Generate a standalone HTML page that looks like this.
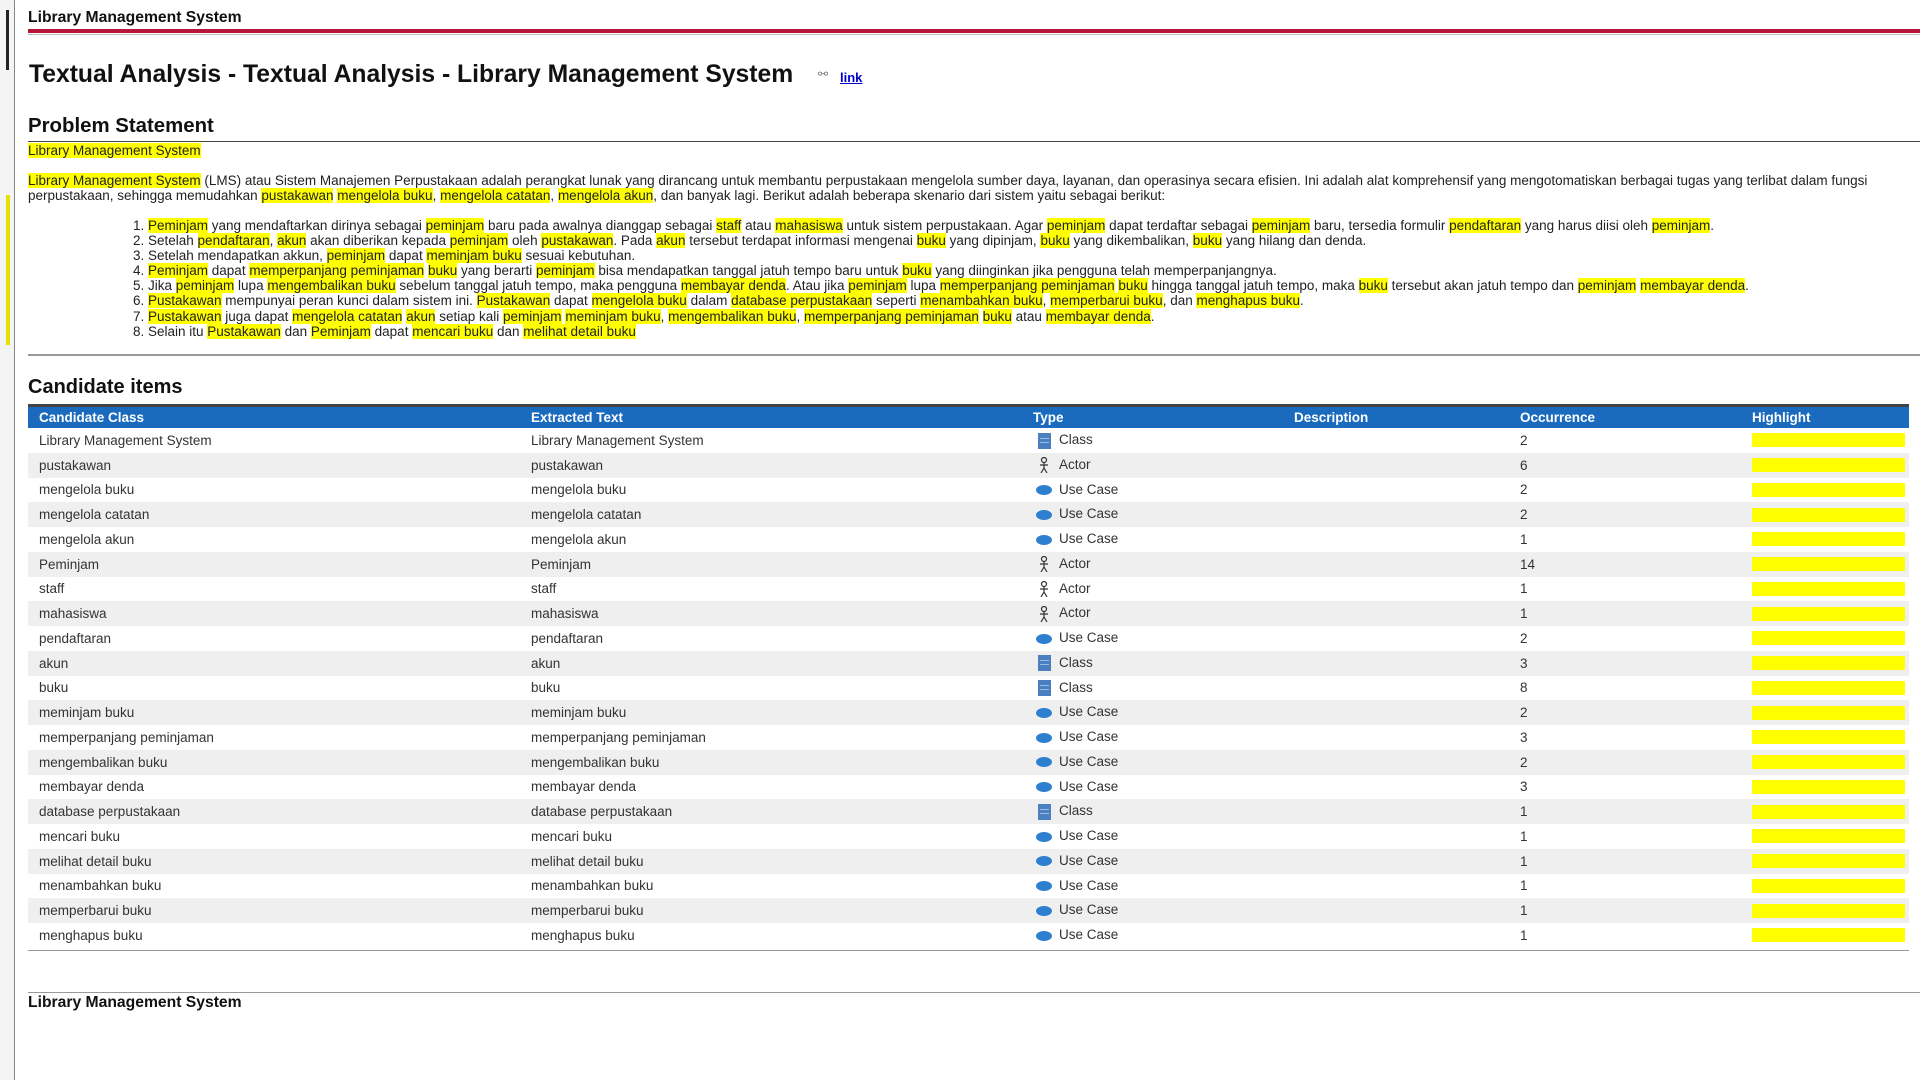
<!DOCTYPE html>
<html><head><meta charset="utf-8"><style>
*{margin:0;padding:0;box-sizing:border-box}
body{width:1920px;height:1080px;overflow:hidden;background:#fff;font-family:"Liberation Sans",Arial,sans-serif;color:#222;position:relative}
.a{position:absolute;white-space:nowrap}
m{background:#ffff00;color:#222}
.t{font-size:13.5px;line-height:15.1px}
table{border-collapse:collapse;width:1881px;font-size:13.5px;table-layout:fixed}
td,th{height:24.75px;padding:0 0 0 11px;text-align:left;white-space:nowrap;color:#333}
th{color:#fff;background:#1a6bbd;font-weight:bold;height:21px}
tr:nth-child(odd) td{background:#efefef}
.hl{display:block;width:153px;height:14px;background:#ffff00}
.ic{display:inline-block;vertical-align:middle;margin-left:3px;margin-right:7px;width:16px}
</style></head><body>
<div class="a" style="left:14px;top:0;width:1px;height:1080px;background:#888"></div>
<div class="a" style="left:0;top:0;width:14px;height:1080px;background:#f4f4f4"></div>
<div class="a" style="left:6px;top:10px;width:3px;height:60px;background:#222"></div>
<div class="a" style="left:6px;top:195px;width:4px;height:150px;background:#e8e000"></div>

<div class="a" style="left:28px;top:9px;font-size:15.7px;font-weight:bold;color:#111">Library Management System</div>
<div class="a" style="left:28px;top:29px;width:1892px;height:4px;background:#b5173a"></div>
<div class="a" style="left:28px;top:34px;width:1892px;height:1px;background:#bbb"></div>

<div class="a" style="left:29px;top:61px;font-size:24.7px;font-weight:bold;color:#111">Textual Analysis - Textual Analysis - Library Management System</div>
<div class="a" style="left:818px;top:67px;font-size:12px;color:#777">⚯</div>
<div class="a" style="left:840px;top:70px;font-size:13px;font-weight:bold;color:#00c;text-decoration:underline">link</div>

<div class="a" style="left:28px;top:115px;font-size:20.4px;font-weight:bold;color:#111">Problem Statement</div>
<div class="a" style="left:28px;top:141px;width:1892px;height:1px;background:#444"></div>
<div class="a t" style="left:28px;top:143px"><m>Library Management System</m></div>
<div class="a t" style="left:28px;top:173px"><m>Library Management System</m> (LMS) atau Sistem Manajemen Perpustakaan adalah perangkat lunak yang dirancang untuk membantu perpustakaan mengelola sumber daya, layanan, dan operasinya secara efisien. Ini adalah alat komprehensif yang mengotomatiskan berbagai tugas yang terlibat dalam fungsi<br>perpustakaan, sehingga memudahkan <m>pustakawan</m> <m>mengelola buku</m>, <m>mengelola catatan</m>, <m>mengelola akun</m>, dan banyak lagi. Berikut adalah beberapa skenario dari sistem yaitu sebagai berikut:</div>

<ol class="a t" style="left:148px;top:218px">
<li><m>Peminjam</m> yang mendaftarkan dirinya sebagai <m>peminjam</m> baru pada awalnya dianggap sebagai <m>staff</m> atau <m>mahasiswa</m> untuk sistem perpustakaan. Agar <m>peminjam</m> dapat terdaftar sebagai <m>peminjam</m> baru, tersedia formulir <m>pendaftaran</m> yang harus diisi oleh <m>peminjam</m>.</li>
<li>Setelah <m>pendaftaran</m>, <m>akun</m> akan diberikan kepada <m>peminjam</m> oleh <m>pustakawan</m>. Pada <m>akun</m> tersebut terdapat informasi mengenai <m>buku</m> yang dipinjam, <m>buku</m> yang dikembalikan, <m>buku</m> yang hilang dan denda.</li>
<li>Setelah mendapatkan akkun, <m>peminjam</m> dapat <m>meminjam buku</m> sesuai kebutuhan.</li>
<li><m>Peminjam</m> dapat <m>memperpanjang peminjaman</m> <m>buku</m> yang berarti <m>peminjam</m> bisa mendapatkan tanggal jatuh tempo baru untuk <m>buku</m> yang diinginkan jika pengguna telah memperpanjangnya.</li>
<li>Jika <m>peminjam</m> lupa <m>mengembalikan buku</m> sebelum tanggal jatuh tempo, maka pengguna <m>membayar denda</m>. Atau jika <m>peminjam</m> lupa <m>memperpanjang peminjaman</m> <m>buku</m> hingga tanggal jatuh tempo, maka <m>buku</m> tersebut akan jatuh tempo dan <m>peminjam</m> <m>membayar denda</m>.</li>
<li><m>Pustakawan</m> mempunyai peran kunci dalam sistem ini. <m>Pustakawan</m> dapat <m>mengelola buku</m> dalam <m>database perpustakaan</m> seperti <m>menambahkan buku</m>, <m>memperbarui buku</m>, dan <m>menghapus buku</m>.</li>
<li><m>Pustakawan</m> juga dapat <m>mengelola catatan</m> <m>akun</m> setiap kali <m>peminjam</m> <m>meminjam buku</m>, <m>mengembalikan buku</m>, <m>memperpanjang peminjaman</m> <m>buku</m> atau <m>membayar denda</m>.</li>
<li>Selain itu <m>Pustakawan</m> dan <m>Peminjam</m> dapat <m>mencari buku</m> dan <m>melihat detail buku</m></li>
</ol>

<div class="a" style="left:28px;top:354px;width:1892px;height:2px;background:#999"></div>

<div class="a" style="left:28px;top:376px;font-size:20px;font-weight:bold;color:#111">Candidate items</div>
<div class="a" style="left:28px;top:404px;width:1881px;height:3px;background:#444"></div>

<div class="a" style="left:28px;top:407px">
<svg width="0" height="0" style="position:absolute"><defs>
<g id="cls"><rect x="2" y="0" width="13" height="16" fill="#4a7fc0"/><rect x="4" y="5" width="9" height="1" fill="#9bbbe0"/><rect x="4" y="9" width="9" height="1" fill="#9bbbe0"/></g>
<g id="uc"><ellipse cx="8" cy="8" rx="8" ry="5" fill="#2f7fd0"/></g>
<g id="act" fill="none" stroke="#333" stroke-width="1.2"><circle cx="8" cy="3" r="2.5"/><path d="M8 5.5V11M4 8h8M8 11l-3 5M8 11l3 5"/></g>
</defs></svg>
<table>
<colgroup><col style="width:492px"><col style="width:502px"><col style="width:261px"><col style="width:226px"><col style="width:232px"><col></colgroup>
<tr><th>Candidate Class</th><th>Extracted Text</th><th>Type</th><th>Description</th><th>Occurrence</th><th>Highlight</th></tr>
<tr><td>Library Management System</td><td>Library Management System</td><td><svg class="ic" width="16" height="16"><use href="#cls"/></svg>Class</td><td></td><td>2</td><td><span class="hl"></span></td></tr>
<tr><td>pustakawan</td><td>pustakawan</td><td><svg class="ic" width="16" height="16"><use href="#act"/></svg>Actor</td><td></td><td>6</td><td><span class="hl"></span></td></tr>
<tr><td>mengelola buku</td><td>mengelola buku</td><td><svg class="ic" width="16" height="16"><use href="#uc"/></svg>Use Case</td><td></td><td>2</td><td><span class="hl"></span></td></tr>
<tr><td>mengelola catatan</td><td>mengelola catatan</td><td><svg class="ic" width="16" height="16"><use href="#uc"/></svg>Use Case</td><td></td><td>2</td><td><span class="hl"></span></td></tr>
<tr><td>mengelola akun</td><td>mengelola akun</td><td><svg class="ic" width="16" height="16"><use href="#uc"/></svg>Use Case</td><td></td><td>1</td><td><span class="hl"></span></td></tr>
<tr><td>Peminjam</td><td>Peminjam</td><td><svg class="ic" width="16" height="16"><use href="#act"/></svg>Actor</td><td></td><td>14</td><td><span class="hl"></span></td></tr>
<tr><td>staff</td><td>staff</td><td><svg class="ic" width="16" height="16"><use href="#act"/></svg>Actor</td><td></td><td>1</td><td><span class="hl"></span></td></tr>
<tr><td>mahasiswa</td><td>mahasiswa</td><td><svg class="ic" width="16" height="16"><use href="#act"/></svg>Actor</td><td></td><td>1</td><td><span class="hl"></span></td></tr>
<tr><td>pendaftaran</td><td>pendaftaran</td><td><svg class="ic" width="16" height="16"><use href="#uc"/></svg>Use Case</td><td></td><td>2</td><td><span class="hl"></span></td></tr>
<tr><td>akun</td><td>akun</td><td><svg class="ic" width="16" height="16"><use href="#cls"/></svg>Class</td><td></td><td>3</td><td><span class="hl"></span></td></tr>
<tr><td>buku</td><td>buku</td><td><svg class="ic" width="16" height="16"><use href="#cls"/></svg>Class</td><td></td><td>8</td><td><span class="hl"></span></td></tr>
<tr><td>meminjam buku</td><td>meminjam buku</td><td><svg class="ic" width="16" height="16"><use href="#uc"/></svg>Use Case</td><td></td><td>2</td><td><span class="hl"></span></td></tr>
<tr><td>memperpanjang peminjaman</td><td>memperpanjang peminjaman</td><td><svg class="ic" width="16" height="16"><use href="#uc"/></svg>Use Case</td><td></td><td>3</td><td><span class="hl"></span></td></tr>
<tr><td>mengembalikan buku</td><td>mengembalikan buku</td><td><svg class="ic" width="16" height="16"><use href="#uc"/></svg>Use Case</td><td></td><td>2</td><td><span class="hl"></span></td></tr>
<tr><td>membayar denda</td><td>membayar denda</td><td><svg class="ic" width="16" height="16"><use href="#uc"/></svg>Use Case</td><td></td><td>3</td><td><span class="hl"></span></td></tr>
<tr><td>database perpustakaan</td><td>database perpustakaan</td><td><svg class="ic" width="16" height="16"><use href="#cls"/></svg>Class</td><td></td><td>1</td><td><span class="hl"></span></td></tr>
<tr><td>mencari buku</td><td>mencari buku</td><td><svg class="ic" width="16" height="16"><use href="#uc"/></svg>Use Case</td><td></td><td>1</td><td><span class="hl"></span></td></tr>
<tr><td>melihat detail buku</td><td>melihat detail buku</td><td><svg class="ic" width="16" height="16"><use href="#uc"/></svg>Use Case</td><td></td><td>1</td><td><span class="hl"></span></td></tr>
<tr><td>menambahkan buku</td><td>menambahkan buku</td><td><svg class="ic" width="16" height="16"><use href="#uc"/></svg>Use Case</td><td></td><td>1</td><td><span class="hl"></span></td></tr>
<tr><td>memperbarui buku</td><td>memperbarui buku</td><td><svg class="ic" width="16" height="16"><use href="#uc"/></svg>Use Case</td><td></td><td>1</td><td><span class="hl"></span></td></tr>
<tr><td>menghapus buku</td><td>menghapus buku</td><td><svg class="ic" width="16" height="16"><use href="#uc"/></svg>Use Case</td><td></td><td>1</td><td><span class="hl"></span></td></tr>
</table>
</div>
<div class="a" style="left:28px;top:950px;width:1881px;height:1px;background:#999"></div>
<div class="a" style="left:28px;top:992px;width:1892px;height:1px;background:#999"></div>
<div class="a" style="left:28px;top:994px;font-size:15.7px;font-weight:bold;color:#111">Library Management System</div>
</body></html>
